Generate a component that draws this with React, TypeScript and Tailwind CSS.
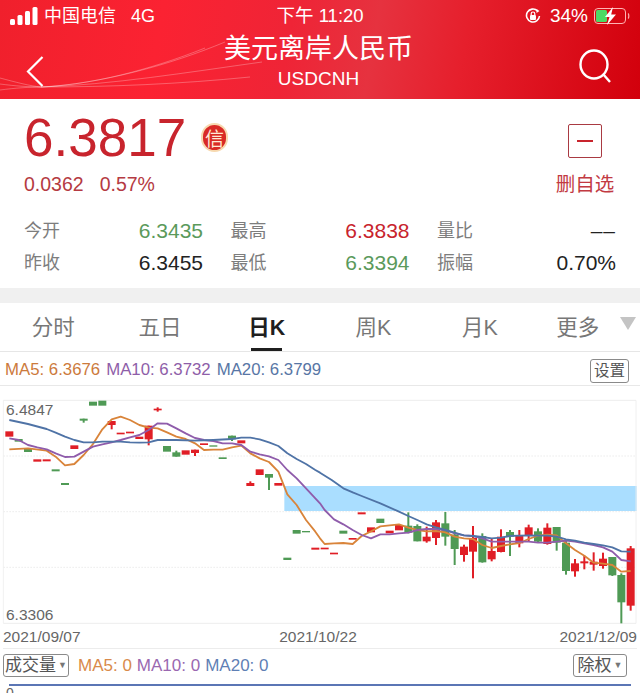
const R = "#e01e26";
const G = "#4f9a55";

type C = [number, number, number, "r" | "g", number?, number?];

const left: C[] = [
  [28,124,140,"r"],[56,147,155,"g"],[84,176,186,"g"],[112,208,215,"r"],[140,208,214,"r"],[167,238,244,"g"],[195,279,285,"g"],[223,166,177,"r"],[251,86,92,"g",86,98],[279,35,47,"g"],[307,32,47,"g"],[335,93,105,"r",93,118],[362,128,133,"r"],[390,125,130,"r"],[418,140,147,"r"],[446,107,148,"r",107,166],[473,56,61,"r",52,65],[501,168,185,"g"],[529,187,200,"g",182,200],[557,181,194,"r"],[585,179,189,"r",179,198],[612,160,165,"r"],[640,166,170,"g"],[668,202,207,"g"],[696,137,148,"g",137,153],[724,151,160,"r"],[751,279,288,"r",274,288],[779,238,255,"r"],[807,252,263,"g",252,300],[835,279,287,"r"],[862,503,510,"g"],[890,420,431,"g"],[918,423,427,"g"],[946,473,479,"r"],
];
const right: C[] = [
  [14,473,478,"r"],[42,488,493,"r"],[70,422,431,"g"],[98,444,449,"r"],[125,367,373,"r"],[153,412,427,"r"],[181,386,399,"g"],[209,422,430,"r"],[237,405,421,"r"],[265,407,428,"g",367,430],[292,408,454,"g",403,454],[320,440,454,"r",410,458],[348,397,444,"r",390,465],[376,400,440,"g",366,467],[404,434,477,"g",420,525],[432,470,495,"r",464,515],[459,444,485,"r",408,565],[487,438,517,"g",430,518],[515,483,508,"r",445,514],[543,440,486,"r",418,487],[570,426,440,"g",420,498],[598,437,460,"r",420,472],[626,412,438,"r",404,455],[654,424,455,"g",415,457],[682,413,462,"r",400,464],[710,411,458,"g",411,482],[738,458,543,"g",450,554],[765,520,544,"r",507,560],[793,514,520,"r",497,538],[821,515,524,"r",487,542],[849,506,528,"r",488,536],[877,501,556,"g",501,558],[904,555,637,"g",550,700],[932,475,647,"r",468,662],
];
const candles: C[] = [...left, ...right.map((c) => [c[0] + 960, c[1], c[2], c[3], c[4], c[5]] as C)];

const ma5l = [28,178,84,175,140,182,167,200,195,226,223,222,251,195,279,162,307,118,335,88,362,80,390,90,418,105,446,113,473,115,501,127,529,140,557,147,585,160,612,180,640,179,668,179,696,172,724,167,751,190,779,205,807,216,835,245,862,313,890,345,918,390,946,425,960,445];
const ma5r = [14,462,42,460,70,459,98,462,125,438,153,424,181,409,209,406,237,403,265,413,292,420,320,424,348,423,376,427,404,440,432,445,459,447,487,465,515,474,543,468,570,463,598,459,626,447,654,437,682,434,710,436,738,460,765,480,793,497,821,518,849,521,877,525,904,545,932,543];
const ma10l = [28,145,56,150,84,165,112,172,140,178,167,190,195,201,223,200,251,185,279,170,307,163,335,157,362,150,390,142,418,135,446,120,473,100,501,101,529,115,557,130,585,144,612,150,640,153,668,160,696,160,724,165,751,185,779,193,807,199,835,210,862,240,890,265,918,295,946,325,960,340];
const ma10r = [14,360,42,388,70,403,98,420,125,435,153,445,181,433,209,433,237,430,265,428,292,420,320,417,348,417,376,420,404,430,432,436,459,438,487,445,515,455,543,455,570,455,598,455,626,455,654,458,682,458,710,455,738,452,765,455,793,460,821,465,849,472,877,485,904,510,932,514];
const ma20l = [28,90,84,102,140,117,167,128,195,140,223,150,251,157,279,157,307,155,335,155,362,155,390,157,418,158,446,157,473,150,529,150,585,152,640,150,696,147,724,143,751,143,779,148,807,157,835,168,862,190,890,207,918,222,946,240,960,248];
const ma20r = [35,270,70,295,100,308,125,318,181,340,237,365,265,378,292,390,320,403,348,412,376,420,404,428,432,436,459,438,487,441,515,445,543,443,570,438,598,437,626,436,654,437,682,437,710,440,738,448,765,452,793,458,821,462,849,466,877,472,904,484,932,485];

function pts(l: number[], r: number[]) {
  const out: string[] = [];
  for (let i = 0; i < l.length; i += 2) out.push(`${l[i]},${l[i + 1]}`);
  for (let i = 0; i < r.length; i += 2) out.push(`${r[i] + 960},${r[i + 1]}`);
  return out.join(" ");
}

function Chart() {
  return (
    <svg viewBox="0 -12 1920 714" className="absolute inset-0 block w-full h-full">
      <rect x="853" y="288" width="1057" height="75" fill="#aadeff" />
      {[31, 198, 365, 532, 700].map((y) => (
        <line key={y} x1="10" x2="1908" y1={y} y2={y} stroke="#e8e8e8" strokeWidth="2.4" strokeDasharray={y === 31 || y === 700 ? undefined : "5 4"} />
      ))}
      <line x1="10" x2="10" y1="31" y2="700" stroke="#ececec" strokeWidth="2.4" />
      <line x1="1908" x2="1908" y1="31" y2="700" stroke="#ececec" strokeWidth="2.4" />
      {candles.map((c, i) => {
        const [x, t, b, k, w1, w2] = c;
        const col = k === "r" ? R : G;
        return (
          <g key={i} fill={col}>
            {w1 !== undefined && <rect x={x - 3} y={w1} width="6" height={(w2 as number) - w1} />}
            <rect x={x - 12} y={t} width="24" height={b - t} />
          </g>
        );
      })}
      <polyline points={pts(ma5l, ma5r)} fill="none" stroke="#d9843a" strokeWidth="5.5" strokeLinejoin="round" />
      <polyline points={pts(ma10l, ma10r)} fill="none" stroke="#8f5cab" strokeWidth="5.5" strokeLinejoin="round" />
      <polyline points={pts(ma20l, ma20r)} fill="none" stroke="#4f73a6" strokeWidth="5.5" strokeLinejoin="round" />
    </svg>
  );
}

function Signal() {
  return (
    <svg width="28" height="20" viewBox="0 0 28 20" className="block">
      <rect x="0" y="13" width="5" height="6" rx="1.5" fill="#fff" />
      <rect x="7.5" y="9" width="5" height="10" rx="1.5" fill="#fff" />
      <rect x="15" y="5" width="5" height="14" rx="1.5" fill="#fff" />
      <rect x="22.5" y="1" width="5" height="18" rx="1.5" fill="#fff" />
    </svg>
  );
}

function Battery() {
  return (
    <svg width="36" height="18" viewBox="0 0 36 18" className="block">
      <rect x="0.5" y="1.5" width="31" height="15" rx="3.5" fill="none" stroke="#ffb3b3" />
      <rect x="2" y="3" width="11" height="12" rx="1.5" fill="#4cd964" />
      <path d="M34 6.5c1 .5 1.2 4.500 0 5" fill="none" stroke="#ffb3b3" strokeWidth="1.2" />
      <path d="M19 0 L11 10 H15.500 L13 18 L22 7.500 H17.200 Z" fill="#fff" />
    </svg>
  );
}

function Stat({ label, value, color }: { label: string; value: string; color: string }) {
  return (
    <div className="flex w-full justify-between">
      <span className="text-[18px] leading-[32px] text-[#7d7d7d]">{label}</span>
      <span className={`text-[21px] leading-[32px] ${color}`}>{value}</span>
    </div>
  );
}

const tabs = ["分时", "五日", "日K", "周K", "月K", "更多"];

export default function App() {
  return (
    <div
      className="relative w-[640px] h-[693px] overflow-hidden bg-white"
      style={{ fontFamily: '"Liberation Sans","Noto Sans CJK SC",sans-serif' }}
    >
      <header className="relative h-[99px] text-white bg-[linear-gradient(100deg,#f0202c_0%,#fb2232_25%,#ef2436_45%,#e6323f_58%,#e61f2c_72%,#d2000c_100%)]">
        <svg viewBox="0 0 280 99" className="absolute left-0 top-0 w-[280px] h-[99px]">
          <g fill="none" stroke="#ffffff" strokeOpacity="0.35" strokeWidth="0.8">
            <path d="M0 78 C15 82 30 86 41 87" />
            <path d="M0 90 C15 88 30 87 41 87" />
            <path d="M0 84 C15 86 30 87 41 87" />
            <path d="M41 87 C100 84 170 65 225 42" />
            <path d="M41 87 C110 85 190 72 262 62" />
            <path d="M41 87 C110 87 180 84 250 77" />
            <path d="M41 87 C90 85 150 70 205 48" />
          </g>
        </svg>
        <div className="relative flex h-[32px] items-center pl-[10px] pr-[10px] text-[18px]">
          <div className="flex w-[213px] items-center">
            <Signal />
            <span className="ml-[6px]">中国电信</span>
            <span className="ml-[15px]">4G</span>
          </div>
          <span className="ml-[54px] w-[249px] text-[18.5px]">下午 11:20</span>
          <svg width="16" height="16" viewBox="0 0 16 16">
            <path d="M12.5 2.800A6.500 6.500 0 1 0 14.500 8" fill="none" stroke="#fff" strokeWidth="1.600" />
            <path d="M11.500 1 L14.500 3 L11.500 5 Z" fill="#fff" />
            <rect x="5" y="7" width="6" height="5" rx="1" fill="#fff" />
            <path d="M6.200 7V5.800a1.800 1.800 0 0 1 3.600 0V7" fill="none" stroke="#fff" strokeWidth="1.200" />
          </svg>
          <span className="ml-[9px] text-[19px]">34%</span>
          <span className="ml-[6px]"><Battery /></span>
        </div>
        <div className="relative grid h-[67px] grid-cols-[1fr_auto_1fr] items-start pl-[26px] pr-[29px]">
          <svg width="18" height="31" viewBox="0 0 18 31" className="mt-[24px]">
            <path d="M16.500 1 L2 15.500 L16.500 30" fill="none" stroke="#fff" strokeWidth="2.200" />
          </svg>
          <div className="flex flex-col items-center">
            <span className="text-[27px] leading-[34px]">美元离岸人民币</span>
            <span className="text-[19px] leading-[24px] mt-[1px]">USDCNH</span>
          </div>
          <svg width="32" height="34" viewBox="0 0 32 34" className="mt-[17px] justify-self-end">
            <ellipse cx="15" cy="15.500" rx="13.500" ry="14" fill="none" stroke="#fff" strokeWidth="2.400" />
            <path d="M24 25 L31 33" stroke="#fff" strokeWidth="2.400" />
          </svg>
        </div>
      </header>

      <section className="h-[189px] px-[24px]">
        <div className="flex h-[115px] justify-between">
          <div>
            <div className="flex h-[70px] items-start">
              <span className="text-[53px] leading-[78px] text-[#c8242d]">6.3817</span>
              <div className="ml-[15px] mt-[24px] flex h-[29px] w-[27px] items-center justify-center rounded-full border-[2px] border-[#f7d9b0] bg-[#d92a26] text-[19px] leading-none text-[#ffe9d6]" style={{ fontFamily: '"Noto Sans CJK SC",serif' }}>信</div>
            </div>
            <div className="mt-[3px] flex text-[19.5px] leading-[24px] text-[#b53a42]">
              <span>0.0362</span>
              <span className="ml-[16px]">0.57%</span>
            </div>
          </div>
          <div className="flex w-[60px] translate-x-[-1px] flex-col items-center pt-[25px]">
            <div className="flex h-[34px] w-[34px] items-center justify-center rounded-[2px] border-[1.5px] border-[#a93a42]">
              <div className="h-[2px] w-[16px] bg-[#c8242d]" />
            </div>
            <span className="mt-[13px] text-[19.5px] leading-[26px] text-[#c23a42]">删自选</span>
          </div>
        </div>
        <div className="mt-[1px] flex justify-between">
          <div className="w-[179px]">
            <Stat label="今开" value="6.3435" color="text-[#5b9a5b]" />
            <Stat label="昨收" value="6.3455" color="text-[#222222]" />
          </div>
          <div className="w-[179px]">
            <Stat label="最高" value="6.3838" color="text-[#c8242d]" />
            <Stat label="最低" value="6.3394" color="text-[#5b9a5b]" />
          </div>
          <div className="w-[179px]">
            <Stat label="量比" value="––" color="text-[#222222] tracking-[1px]" />
            <Stat label="振幅" value="0.70%" color="text-[#222222]" />
          </div>
        </div>
      </section>

      <div className="h-[15px] bg-[#f0f0f0]" />

      <nav className="grid h-[49px] grid-cols-6 border-b border-[#e6e6e6]">
        {tabs.map((t, i) => (
          <div key={t} className={`relative flex h-[48px] items-center justify-center pt-[3px] text-[21.5px] ${i === 2 ? "font-bold text-[#1f1f1f]" : "text-[#777777]"}`}>
            <span className={i === 5 ? "mr-[18px]" : ""}>{t}</span>
            {i === 2 && <div className="absolute bottom-0 left-[38px] h-[3px] w-[31px] bg-[#1f1f1f]" />}
            {i === 5 && (
              <svg width="16" height="13" viewBox="0 0 16 13" className="absolute right-[4px] top-[14px]">
                <path d="M0 0H16L8 13Z" fill="#c4c4c4" />
              </svg>
            )}
          </div>
        ))}
      </nav>

      <div className="flex h-[34px] items-center border-b border-[#e8e8e8] pl-[5px] pr-[11px] text-[16.8px]">
        <span className="pt-[3px] text-[#cc7a3c]">MA5: 6.3676</span>
        <span className="ml-[6px] pt-[3px] text-[#8e5ea8]">MA10: 6.3732</span>
        <span className="ml-[6px] pt-[3px] text-[#5876a5]">MA20: 6.3799</span>
        <span className="ml-auto mt-[5px] flex h-[24px] w-[39px] items-center justify-center rounded-[3px] border border-[#8a8a8a] text-[15.5px] text-[#555555]">设置</span>
      </div>

      <div className="relative h-[238px]">
        <Chart />
        <span className="absolute left-[6px] top-[15px] text-[15.5px] leading-[18px] text-[#666666]">6.4847</span>
        <span className="absolute left-[6px] top-[220px] text-[15.5px] leading-[18px] text-[#666666]">6.3306</span>
      </div>

      <div className="mx-[3px] flex h-[25px] items-center justify-between border-b border-[#ececec] pt-[2px] text-[15.5px] text-[#666666]">
        <span>2021/09/07</span>
        <span className="translate-x-[-2px]">2021/10/22</span>
        <span>2021/12/09</span>
      </div>

      <div className="flex h-[31px] items-center pl-[3px] pr-[13px] pt-[2px]">
        <span className="flex h-[23px] w-[66px] items-center justify-center rounded-[3px] border border-[#8a8a8a] text-[17px] text-[#555555]">
          成交量<span className="ml-[2px] text-[9px] text-[#777777]">▼</span>
        </span>
        <div className="ml-[9px] text-[17px]">
          <span className="text-[#d98a4a]">MA5: 0</span>
          <span className="ml-[5px] text-[#9a68b0]">MA10: 0</span>
          <span className="ml-[5px] text-[#5f7fb5]">MA20: 0</span>
        </div>
        <span className="ml-auto flex h-[23px] w-[54px] items-center justify-center rounded-[3px] border border-[#8a8a8a] text-[17px] text-[#555555]">
          除权<span className="ml-[2px] text-[9px] text-[#777777]">▼</span>
        </span>
      </div>

      <div className="mx-[9px] mt-[4px] h-[2px] bg-[#5b76b5]" />
      <div className="ml-[6px] text-[14px] leading-[14px] text-[#666666]">0</div>
    </div>
  );
}
